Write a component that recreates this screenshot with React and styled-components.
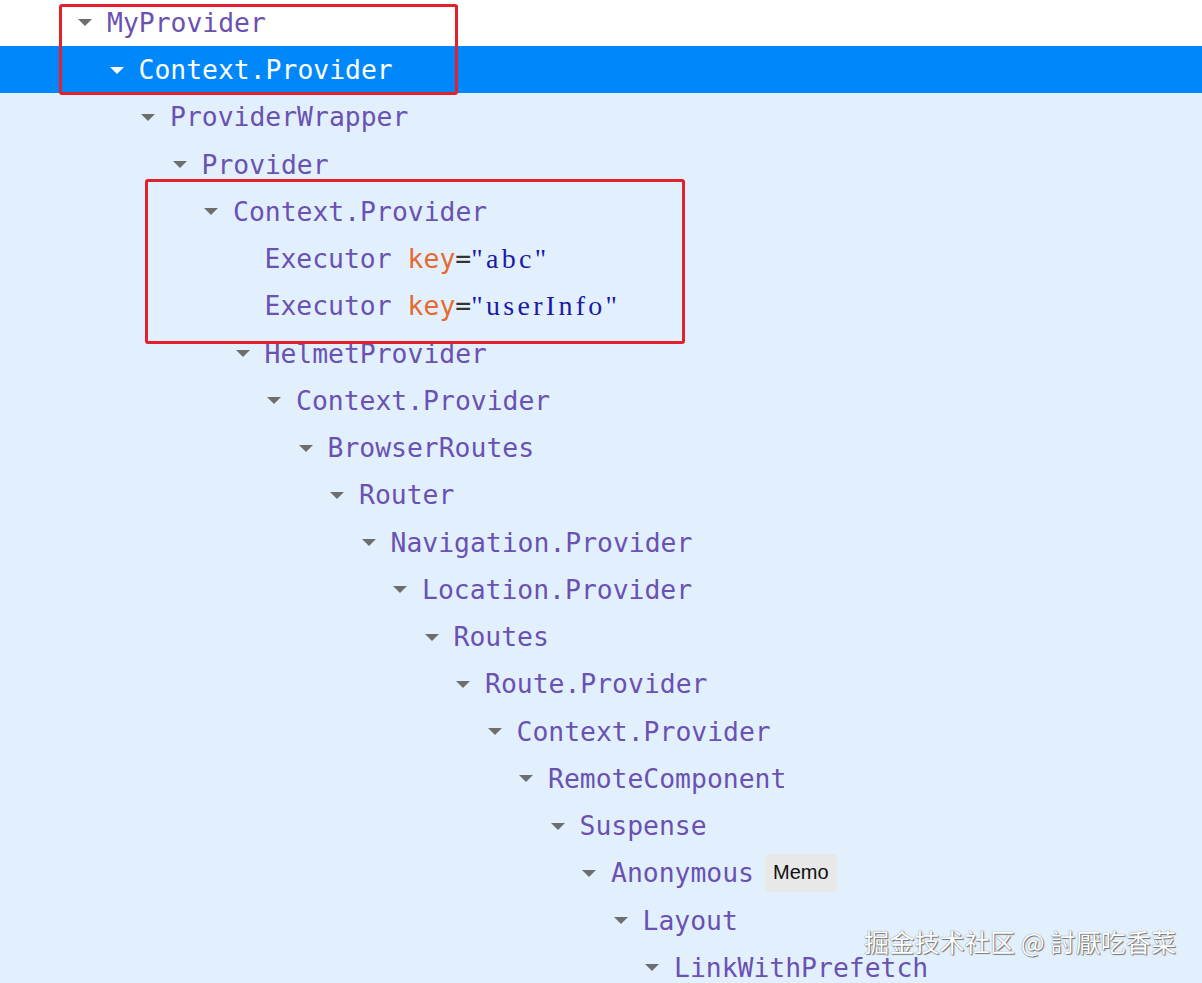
import React from "react";
import styled, { createGlobalStyle } from "styled-components";

const GlobalStyle = createGlobalStyle`
  html, body {
    margin: 0;
    padding: 0;
    background: #e2f0fe;
  }
  body {
    font-family: "DejaVu Sans Mono", "Liberation Mono", monospace;
  }
`;

const tree = [
  { name: "MyProvider", depth: 0, state: "plain" },
  { name: "Context.Provider", depth: 1, state: "selected" },
  { name: "ProviderWrapper", depth: 2 },
  { name: "Provider", depth: 3 },
  { name: "Context.Provider", depth: 4 },
  { name: "Executor", depth: 5, leaf: true, keyValue: "abc" },
  { name: "Executor", depth: 5, leaf: true, keyValue: "userInfo" },
  { name: "HelmetProvider", depth: 5 },
  { name: "Context.Provider", depth: 6 },
  { name: "BrowserRoutes", depth: 7 },
  { name: "Router", depth: 8 },
  { name: "Navigation.Provider", depth: 9 },
  { name: "Location.Provider", depth: 10 },
  { name: "Routes", depth: 11 },
  { name: "Route.Provider", depth: 12 },
  { name: "Context.Provider", depth: 13 },
  { name: "RemoteComponent", depth: 14 },
  { name: "Suspense", depth: 15 },
  { name: "Anonymous", depth: 16, badge: "Memo" },
  { name: "Layout", depth: 17 },
  { name: "LinkWithPrefetch", depth: 18 },
];

const App = () => {
  return (
    <>
      <GlobalStyle />
      <Page>
        <Tree>
          {tree.map((item, i) => (
            <Row key={i} $state={item.state} $depth={item.depth}>
              {item.leaf ? (
                <Spacer />
              ) : (
                <Arrow $state={item.state} />
              )}
              <Name $state={item.state}>{item.name}</Name>
              {item.keyValue && (
                <>
                  <KeyName>key</KeyName>
                  <Equals>=</Equals>
                  <KeyValue>"{item.keyValue}"</KeyValue>
                </>
              )}
              {item.badge && <Badge>{item.badge}</Badge>}
            </Row>
          ))}
        </Tree>
        <Highlight $left={59} $top={4} $width={399} $height={91} />
        <Highlight $left={145} $top={179} $width={540} $height={165} />
        <Watermark>掘金技术社区 @ 討厭吃香菜</Watermark>
      </Page>
    </>
  );
};

const Page = styled.div`
  position: relative;
  width: 1202px;
  height: 983px;
  overflow: hidden;
  background: #e2f0fe;
`;

const Tree = styled.div`
  display: flex;
  flex-direction: column;
  margin-top: -1.25px;
`;

const Row = styled.div`
  display: flex;
  align-items: center;
  height: 47.25px;
  flex-shrink: 0;
  padding-left: ${(p) => 78 + p.$depth * 31.5}px;
  background: ${(p) =>
    p.$state === "selected" ? "#0088fa" : p.$state === "plain" ? "#ffffff" : "transparent"};
  white-space: nowrap;
  font-size: 26.4px;
`;

const Arrow = styled.span`
  width: 0;
  height: 0;
  border-left: 7px solid transparent;
  border-right: 7px solid transparent;
  border-top: 7.5px solid ${(p) => (p.$state === "selected" ? "#ffffff" : "#6e6e6e")};
  margin-right: 15px;
  margin-top: 1px;
`;

const Spacer = styled.span`
  width: 29px;
  flex-shrink: 0;
`;

const Name = styled.span`
  color: ${(p) => (p.$state === "selected" ? "#ffffff" : "#6a51b2")};
  margin-right: 16px;
`;

const KeyName = styled.span`
  color: #e7692d;
`;

const Equals = styled.span`
  color: #333333;
`;

const KeyValue = styled.span`
  color: #1a1aa6;
  font-family: "Liberation Serif", serif;
  font-size: 28px;
  letter-spacing: 3.3px;
`;

const Badge = styled.span`
  display: inline-flex;
  align-items: center;
  height: 38px;
  padding: 0 8px;
  margin-left: -5px;
  background: #e8e8e8;
  border-radius: 4px;
  color: #111111;
  font-family: "Liberation Sans", Arial, sans-serif;
  font-size: 20px;
`;

const Highlight = styled.div`
  position: absolute;
  left: ${(p) => p.$left}px;
  top: ${(p) => p.$top}px;
  width: ${(p) => p.$width}px;
  height: ${(p) => p.$height}px;
  box-sizing: border-box;
  border: 3px solid #e3202e;
  border-radius: 3px;
  pointer-events: none;
`;

const Watermark = styled.div`
  position: absolute;
  left: 864px;
  top: 923px;
  color: #ffffff;
  font-family: "Noto Sans CJK SC", sans-serif;
  font-size: 25.2px;
  text-shadow: 0 0 1px #555555, 1px 1px 1px #777777;
  white-space: nowrap;
`;

export default App;
